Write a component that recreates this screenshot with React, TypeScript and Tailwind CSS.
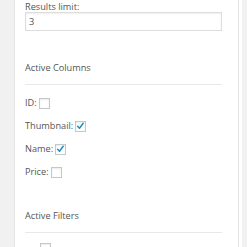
import React from 'react';

const font = { fontFamily: '"Open Sans", "Liberation Sans", sans-serif' };

function Check({ checked }: { checked?: boolean }) {
    return (
        <span className="relative inline-block w-[11px] h-[11px] border border-[#c4c8cc] bg-white shadow-[inset_0_1px_2px_rgba(0,0,0,0.08)]">
            {checked && (
                <svg viewBox="0 0 11 11" className="absolute left-[0px] top-[0px] w-[9px] h-[9px]">
                    <path d="M2 5.2 L4.3 7.6 L8.8 1.6" fill="none" stroke="#1e8cbe" strokeWidth="1.8" strokeLinecap="round" strokeLinejoin="round" />
                </svg>
            )}
        </span>
    );
}

function Row({ label, checked }: { label: string; checked?: boolean }) {
    return (
        <div className="flex items-center gap-[2px] h-[12px] leading-[12px]">
            <span>{label}</span>
            <Check checked={checked} />
        </div>
    );
}

export default function App() {
    return (
        <div className="flex w-[247px] h-[247px] overflow-hidden bg-[#f1f1f1] text-[9.2px] text-[#555]" style={font}>
            <div className="ml-[14px] w-[225px] bg-white border-x border-[#e5e5e5] pl-[10px]">
                <div className="leading-[12px] pt-[1px] h-[12px]">Results limit:</div>
                <div className="w-[197px] h-[19px] border border-[#dddddd] shadow-[inset_0_1px_2px_rgba(0,0,0,0.07)] flex items-center pl-[3px]">3</div>

                <div className="mt-[31px] leading-[12px]">Active Columns</div>
                <div className="mt-[10px] w-[197px] border-t border-[#e8e8e8]" />

                <div className="mt-[12px] flex flex-col gap-[11px]">
                    <Row label="ID:" />
                    <Row label="Thumbnail:" checked />
                    <Row label="Name:" checked />
                    <Row label="Price:" />
                </div>

                <div className="mt-[32px] leading-[12px]">Active Filters</div>
                <div className="mt-[10px] w-[197px] border-t border-[#e8e8e8]" />
                <div className="mt-[10px] pl-[15px]">
                    <Check />
                </div>
            </div>
            <div className="w-[3px] bg-white" />
        </div>
    );
}
